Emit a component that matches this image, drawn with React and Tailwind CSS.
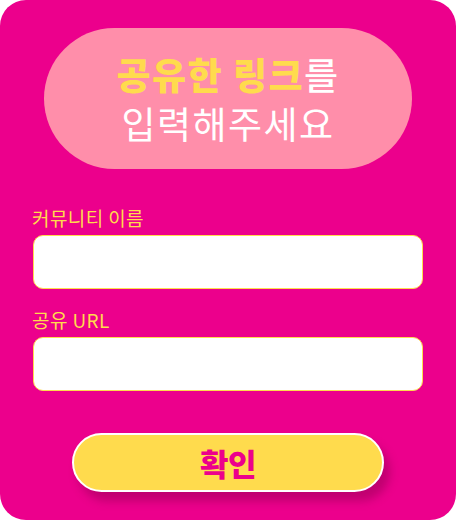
import React, { useState } from 'react';

const font = { fontFamily: '"Noto Sans CJK KR", "Noto Sans", sans-serif' };

const Field = ({ label, value, onChange, className }) => (
  <div className={className}>
    <label className="block text-[19px] leading-[24px] tracking-[0.4px] text-[#FFDB4D] -ml-[1px]">
      {label}
    </label>
    <input
      value={value}
      onChange={(e) => onChange(e.target.value)}
      className="mt-[5px] block w-full h-[54px] rounded-[10px] bg-white border border-[#FFDB4D] outline-none px-4 text-[16px] text-gray-800"
    />
  </div>
);

export default function App() {
  const [name, setName] = useState('');
  const [url, setUrl] = useState('');

  return (
    <div className="w-[456px] h-[521px] bg-white" style={font}>
      <div className="w-[456px] h-[520px] rounded-[26px] bg-[#EC008C] flex flex-col">
        {/* Title pill */}
        <div className="mt-[28px] mx-[44px] h-[141px] rounded-full bg-[#FF8EAA] flex flex-col items-center justify-center">
          <p className="text-[37px] leading-[49px] tracking-[1.5px] text-white">
            <span className="font-black text-[#FFDB4D]">공유한 링크</span>
            <span className="font-medium">를</span>
          </p>
          <p className="text-[37px] leading-[49px] tracking-[1.5px] text-white font-normal">
            입력해주세요
          </p>
        </div>

        {/* Form */}
        <div className="px-[33px] mt-[37px]">
          <Field label="커뮤니티 이름" value={name} onChange={setName} />
          <Field label="공유 URL" value={url} onChange={setUrl} className="mt-[19px]" />
        </div>

        <div className="flex justify-center mt-[42px]">
          <button className="w-[312px] h-[59px] rounded-full bg-[#FFDB4D] border-2 border-white shadow-[6px_9px_10px_rgba(110,0,60,0.35)] text-[31px] leading-none font-black tracking-[-0.5px] text-[#EC008C]">
            확인
          </button>
        </div>
      </div>
    </div>
  );
}
